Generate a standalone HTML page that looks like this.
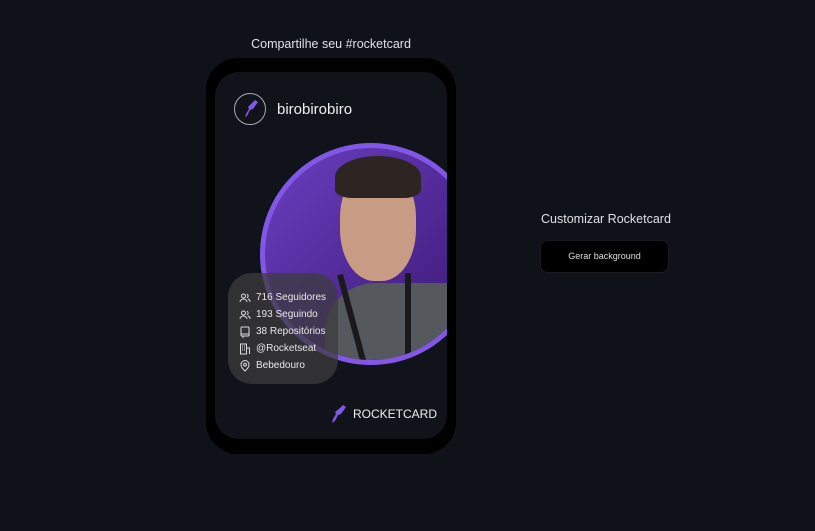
<!DOCTYPE html>
<html><head><meta charset="utf-8"><style>
*{margin:0;padding:0;box-sizing:border-box}
body{width:815px;height:531px;background:#0f1219;font-family:"Liberation Sans",sans-serif;color:#e1e1e6;position:relative;overflow:hidden}
.t{position:absolute;left:206px;width:250px;top:37px;text-align:center;font-size:12.5px;color:#e1e1e6}
.phone{position:absolute;left:206px;top:58px;width:250px;height:396px;background:#000;border-radius:32px}
.card{position:absolute;left:215px;top:72px;width:232px;height:367px;background:#10131a;border-radius:24px;overflow:hidden}
.av{position:absolute;left:19px;top:21px;width:32px;height:32px;border:1px solid #aaa;border-radius:50%}
.name{position:absolute;left:62px;top:29px;font-size:15px;color:#f0f0f0}
.circ{position:absolute;left:45px;top:71px;width:222px;height:222px;border-radius:50%;border:5px solid #8257e5;background:linear-gradient(135deg,#6a3fc0,#3a1670);overflow:hidden}
.stats{position:absolute;left:13px;top:201px;width:110px;height:111px;border-radius:24px;background:rgba(60,60,62,.75);padding:16px 0 0 11px;font-size:10px;color:#e8e8e8}
.stats div{height:17px;display:flex;align-items:center;gap:5px}
.stats svg{width:12px;height:12px}
.brand{position:absolute;right:10px;top:332px;font-size:12px;color:#f0f0f0;display:flex;align-items:center;gap:5px}
.cz{position:absolute;left:541px;top:212px;font-size:12.5px}
.btn{position:absolute;left:540px;top:240px;width:129px;height:33px;background:#000;border-radius:8px;border:1px solid #1a1a1f;font-size:9px;text-align:center;line-height:31px;color:#ddd}
</style></head><body>
<div class="t">Compartilhe seu #rocketcard</div>
<div class="phone"></div>
<div class="card">
 <div class="av"><svg width="30" height="30" viewBox="0 0 30 30"><path d="M20 6l3 2-5 7-3 1-3 6-2 1 1-3 3-5-1-2 5-5z" fill="#8257e5"/></svg></div>
 <div class="name">birobirobiro</div>
 <div class="circ">
  <div style="position:absolute;left:60px;top:135px;width:170px;height:100px;background:#55585c;border-radius:50px 50px 0 0"></div>
  <div style="position:absolute;left:75px;top:18px;width:76px;height:115px;background:#c89c84;border-radius:45%"></div>
  <div style="position:absolute;left:70px;top:8px;width:86px;height:42px;background:#2d2521;border-radius:50% 50% 20% 20%"></div>
  <div style="position:absolute;left:85px;top:125px;width:6px;height:100px;background:#1a1a1c;transform:rotate(-15deg)"></div>
  <div style="position:absolute;left:140px;top:125px;width:6px;height:100px;background:#1a1a1c"></div>
 </div>
 <div class="stats">
  <div><svg viewBox="0 0 12 12" fill="none" stroke="#ddd" stroke-width="1"><circle cx="4.5" cy="4" r="2"/><path d="M1 10c0-2 2-3 3.5-3S8 8 8 10M8 2.2a2 2 0 010 3.6M9 7c1.5.5 2 1.5 2 3"/></svg>716 Seguidores</div>
  <div><svg viewBox="0 0 12 12" fill="none" stroke="#ddd" stroke-width="1"><circle cx="4.5" cy="4" r="2"/><path d="M1 10c0-2 2-3 3.5-3S8 8 8 10M8 2.2a2 2 0 010 3.6M9 7c1.5.5 2 1.5 2 3"/></svg>193 Seguindo</div>
  <div><svg viewBox="0 0 12 12" fill="none" stroke="#ddd" stroke-width="1"><rect x="2" y="1" width="8" height="9" rx="1"/><path d="M2 8h8M4 10v2"/></svg>38 Repositórios</div>
  <div><svg viewBox="0 0 12 12" fill="none" stroke="#ddd" stroke-width="1"><rect x="1.5" y="1" width="6" height="10"/><path d="M7.5 5h3v6M3 3h1M5 3h1M3 5h1M5 5h1M3 7h1M5 7h1"/></svg>@Rocketseat</div>
  <div><svg viewBox="0 0 12 12" fill="none" stroke="#ddd" stroke-width="1"><path d="M6 11s-4-3.5-4-6.5a4 4 0 018 0C10 7.5 6 11 6 11z"/><circle cx="6" cy="4.7" r="1.4"/></svg>Bebedouro</div>
 </div>
 <div class="brand"><svg width="18" height="20" viewBox="0 0 18 20"><path d="M13 1l3 2-5 7-3 1-3 6-3 2 1-4 3-5-1-2 5-4z" fill="#8257e5"/></svg>ROCKETCARD</div>
</div>
<div class="cz">Customizar Rocketcard</div>
<div class="btn">Gerar background</div>
</body></html>
